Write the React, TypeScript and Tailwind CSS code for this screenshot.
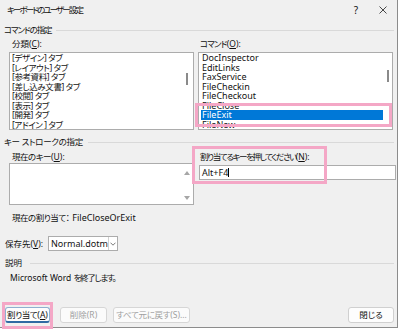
import React from "react";

const U = ({ c }: { c: string }) => (
  <span className="underline underline-offset-[1px] decoration-[0.5px]">{c}</span>
);

const GroupHeader = ({ children, cls }: { children: React.ReactNode; cls: string }) => (
  <div className={`${cls} h-[10px] flex items-center pl-[4px] pr-[3px]`}>
    <span className="whitespace-nowrap">{children}</span>
    <div className="flex-1 ml-[5px] border-t border-[#d9d9d9]" />
  </div>
);

const leftItems = [
  "[デザイン] タブ",
  "[レイアウト] タブ",
  "[参考資料] タブ",
  "[差し込み文書] タブ",
  "[校閲] タブ",
  "[表示] タブ",
  "[開発] タブ",
  "[アドイン ] タブ",
];

const rightItems = [
  "DocInspector",
  "EditLinks",
  "FaxService",
  "FileCheckin",
  "FileCheckout",
  "FileClose",
  "FileExit",
  "FileNew",
];

export default function App() {
  const pink = "absolute border-[3px] border-[#f4a7c6] pointer-events-none";
  return (
    <div className="w-[400px] h-[330px] bg-white overflow-hidden [font-family:'Noto_Sans','Noto_Sans_CJK_JP',sans-serif] [font-feature-settings:'palt'] text-[8.5px] leading-[10px] text-[#111]">
      <div className="relative w-[398px] h-[328px] bg-[#f0f0f0] border-r border-b border-[#8c8c8c] flex flex-col">
        {/* title bar */}
        <div className="h-[20px] flex items-center pl-[7px]">
          <span className="tracking-[-1.9px]">キーボードのユーザー設定</span>
          <div className="ml-auto flex items-center gap-[21px] pr-[10px]">
            <span className="text-[10px]">?</span>
            <svg width="8" height="8" viewBox="0 0 8 8">
              <path d="M0.5 0.5L7.5 7.5M7.5 0.5L0.5 7.5" stroke="#333" strokeWidth="0.9" />
            </svg>
          </div>
        </div>

        <GroupHeader cls="mt-[5px]">
          <span className="tracking-[-1.1px]">コマンドの指定</span>
        </GroupHeader>

        {/* command lists */}
        <div className="mt-[4px] flex pl-[9px] gap-[4px]">
          <div className="w-[185px] flex flex-col">
            <div className="h-[10px] pl-[3px]">
              分類(<U c="C" />):
            </div>
            <div className="relative mt-[3px] h-[78px] bg-white border border-[#acacac] overflow-hidden">
              <div className="flex flex-col pl-[2px] tracking-[-0.4px]">
                {leftItems.map((t) => (
                  <div key={t} className="h-[9.5px] leading-[9.5px] whitespace-nowrap">
                    {t}
                  </div>
                ))}
              </div>
              <div className="absolute right-[5px] top-[20px] w-[2px] h-[12px] bg-[#8a8a8a]" />
            </div>
          </div>
          <div className="w-[195px] flex flex-col">
            <div className="h-[10px] pl-[2px]">
              <span className="tracking-[-0.8px]">コマンド</span>(<U c="O" />):
            </div>
            <div className="relative mt-[3px] h-[78px] bg-white border border-[#acacac] overflow-hidden text-[9px]">
              <div className="flex flex-col pl-[2px] pr-[9px]">
                {rightItems.map((t) => (
                  <div
                    key={t}
                    className={`h-[9.5px] leading-[9.5px] pl-[1px] whitespace-nowrap ${
                      t === "FileExit" ? "bg-[#0078d7] text-white" : ""
                    }`}
                  >
                    {t}
                  </div>
                ))}
              </div>
              <div className="absolute right-[3px] top-[17px] w-[2px] h-[12px] bg-[#8a8a8a]" />
            </div>
          </div>
        </div>

        <GroupHeader cls="mt-[7px]">
          <span className="tracking-[-0.3px]">キー ストロークの指定</span>
        </GroupHeader>

        {/* key stroke */}
        <div className="mt-[5px] flex pl-[9px] gap-[5px]">
          <div className="w-[185px] flex flex-col">
            <div className="h-[10px] pl-[3px]">
              <span className="tracking-[-0.5px]">現在のキー</span>(<U c="U" />):
            </div>
            <div className="relative mt-[1px] h-[42px] bg-white border border-[#acacac]">
              <svg className="absolute right-[3px] top-[7px]" width="6" height="4" viewBox="0 0 6 4">
                <path d="M0 4L3 0L6 4Z" fill="#a6a6a6" />
              </svg>
              <svg className="absolute right-[3px] bottom-[4px]" width="6" height="4" viewBox="0 0 6 4">
                <path d="M0 0L3 4L6 0Z" fill="#a6a6a6" />
              </svg>
            </div>
          </div>
          <div className="w-[197px] flex flex-col">
            <div className="h-[10px] pl-[1px] whitespace-nowrap">
              <span className="tracking-[-1.4px]">割り当てるキーを押してください</span>(<U c="N" />):
            </div>
            <div className="mt-[3px] h-[15px] bg-white border border-[#acacac] flex items-center pl-[2px] text-[9px]">
              <span>Alt+F4</span>
              <span className="w-px h-[9px] bg-black" />
            </div>
          </div>
        </div>

        {/* current assignment */}
        <div className="mt-[8px] h-[10px] flex items-center pl-[12px] whitespace-nowrap">
          <span className="tracking-[-0.5px]">現在の割り当て：</span>
          <span className="ml-[3px] text-[9px]">FileCloseOrExit</span>
        </div>

        {/* save to */}
        <div className="mt-[13px] h-[15px] flex items-center pl-[5px]">
          <span className="w-[43px] whitespace-nowrap">
            保存先(<U c="V" />):
          </span>
          <div className="w-[70px] h-[15px] bg-white border border-[#acacac] flex items-center text-[9px]">
            <span className="flex-1 pl-[2px]">Normal.dotm</span>
            <div className="w-[11px] h-full border-l border-[#d0d0d0] flex items-center justify-center">
              <svg width="6" height="4" viewBox="0 0 6 4">
                <path d="M0.5 0.7L3 3.2L5.5 0.7" stroke="#555" strokeWidth="0.8" fill="none" />
              </svg>
            </div>
          </div>
        </div>

        <div className="mt-[7px] h-[10px] flex items-center pl-[5px] pr-[3px]">
          <span>説明</span>
          <div className="flex-1 ml-[8px] border-t border-[#d9d9d9]" />
        </div>

        <div className="mt-[5px] h-[10px] flex items-center pl-[10px] whitespace-nowrap">
          <span className="text-[8.5px]">Microsoft Word&nbsp;</span>
          <span className="tracking-[-1.3px]">を終了します。</span>
        </div>

        {/* buttons */}
        <div className="mt-[24px] h-[16px] flex items-stretch pl-[5px] pr-[3px]">
          <div className="w-[45px] bg-[#fdfdfd] rounded-[3px] border border-[#8fb0d0] border-b-[2px] border-b-[#2f6aa3] flex items-center justify-center whitespace-nowrap">
            <span className="tracking-[-0.4px]">割り当て</span>(<U c="A" />)
          </div>
          <div className="ml-[10px] w-[47px] bg-[#fbfbfb] rounded-[3px] border border-[#d6d6d6] flex items-center justify-center text-[#a0a0a0] whitespace-nowrap">
            削除(R)
          </div>
          <div className="ml-[6px] w-[77px] bg-[#fbfbfb] rounded-[3px] border border-[#d6d6d6] flex items-center justify-center text-[#a0a0a0] whitespace-nowrap">
            <span className="tracking-[-0.3px]">すべて元に戻す</span>(S)...
          </div>
          <div className="ml-auto w-[46px] bg-[#fdfdfd] rounded-[3px] border border-[#d0d0d0] flex items-center justify-center whitespace-nowrap">
            閉じる
          </div>
        </div>

        {/* pink annotation rectangles */}
        <div className={`${pink} left-[195px] top-[103px] w-[197px] h-[24px]`} />
        <div className={`${pink} left-[192px] top-[146px] w-[135px] h-[38px]`} />
        <div className={`${pink} left-[2px] top-[302px] w-[51px] h-[27px]`} />
      </div>
    </div>
  );
}
